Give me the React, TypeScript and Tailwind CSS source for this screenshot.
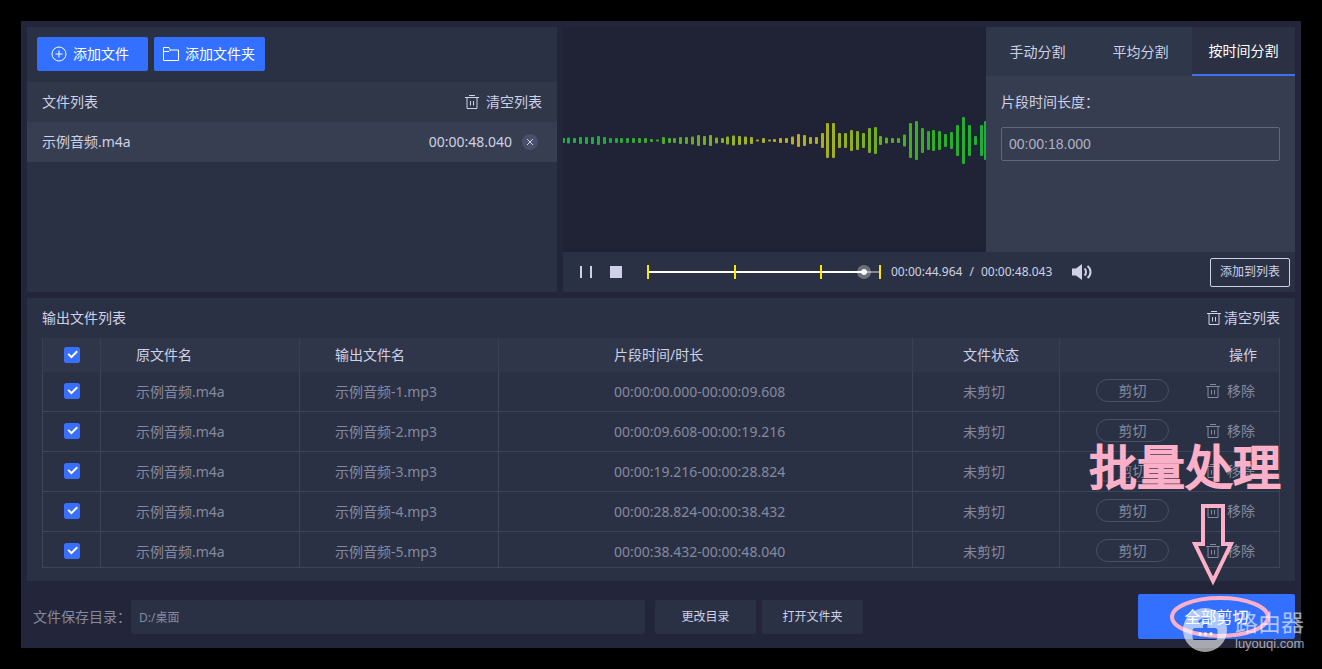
import React from "react";

const BARS: [number, number][] = [
  [0, 5], [5, 6], [11, 5], [17, 7], [23, 7], [29, 7], [35, 9], [41, 7], [47, 5], [53, 5], [58, 5], [64, 5],
  [70, 5], [76, 5], [82, 5], [88, 3], [94, 2], [100, 7], [106, 5], [111, 5], [117, 7], [123, 7], [129, 8],
  [135, 11], [141, 9], [147, 11], [153, 6], [159, 5], [164, 8], [170, 10], [176, 9], [182, 8], [188, 7],
  [194, 2], [200, 5], [206, 2], [211, 3], [217, 5], [223, 5], [229, 8], [235, 13], [241, 11], [247, 7],
  [253, 7], [259, 15], [264, 35], [270, 35], [276, 15], [282, 15], [288, 21], [294, 19], [300, 15],
  [306, 25], [312, 27], [317, 9], [323, 6], [329, 5], [335, 5], [341, 12], [347, 35], [353, 39], [359, 25],
  [365, 19], [370, 21], [376, 19], [382, 13], [388, 17], [394, 31], [400, 47], [406, 31], [412, 9],
  [418, 31], [422, 39],
];

const SEGMENTS = [
  { name: "示例音频-1.mp3", range: "00:00:00.000-00:00:09.608" },
  { name: "示例音频-2.mp3", range: "00:00:09.608-00:00:19.216" },
  { name: "示例音频-3.mp3", range: "00:00:19.216-00:00:28.824" },
  { name: "示例音频-4.mp3", range: "00:00:28.824-00:00:38.432" },
  { name: "示例音频-5.mp3", range: "00:00:38.432-00:00:48.040" },
];

function Trash() {
  return (
    <svg className="size-4 shrink-0" viewBox="0 0 16 16" fill="none" stroke="currentColor" strokeWidth="1" aria-hidden="true">
      <path d="M1 3.5h14M5 1.5h6M3 3.5v11h10v-11M6.5 7v4.5M9.5 7v4.5" />
    </svg>
  );
}

function Tick({ label }: { label: string }) {
  return (
    <label className="mx-auto grid size-4">
      <input
        type="checkbox"
        defaultChecked
        aria-label={label}
        className="peer col-start-1 row-start-1 size-4 appearance-none rounded-xs border border-[#6b7084] checked:border-[#386fff] checked:bg-[#386fff]"
      />
      <svg
        className="pointer-events-none col-start-1 row-start-1 size-4 opacity-0 peer-checked:opacity-100"
        viewBox="0 0 16 16"
        fill="none"
        stroke="#fff"
        strokeWidth="2"
        aria-hidden="true"
      >
        <path d="M4.2 6.900l3.200 3.200 5.800-5.800" />
      </svg>
    </label>
  );
}

function FilePanel() {
  return (
    <section className="min-w-0 flex-[530] bg-[#2b3144]">
      <div className="flex gap-1.5 px-2.5 pt-2.5 pb-[11px] text-sm text-white">
        <button className="flex h-[34px] w-[111px] items-center gap-1.5 rounded-xs bg-[#3370ff] pl-3.5">
          <svg className="size-4" viewBox="0 0 16 16" fill="none" stroke="currentColor" aria-hidden="true">
            <circle cx="8" cy="8" r="7" />
            <path d="M8 4.500v7M4.500 8h7" />
          </svg>
          添加文件
        </button>
        <button className="flex h-[34px] w-[111px] items-center gap-1.5 rounded-xs bg-[#3370ff] pl-[9px]">
          <svg className="size-4" viewBox="0 0 16 16" fill="none" stroke="currentColor" aria-hidden="true">
            <path d="M.5 14.500V1.500h5.500l1.500 2.500h8v10.500zM.5 5.500h5.500l1.500-1.500" />
          </svg>
          添加文件夹
        </button>
      </div>
      <div className="flex h-10 items-center justify-between bg-[#2f3749] px-[15px] text-sm">
        <h2>文件列表</h2>
        <button className="flex items-center gap-1.5">
          <Trash />
          清空列表
        </button>
      </div>
      <div className="flex h-10 items-center bg-[#373e51] pr-[19px] pl-[15px] text-sm">
        <span className="flex-1">示例音频.m4a</span>
        <span>00:00:48.040</span>
        <button aria-label="移除文件" className="ml-2.5 flex size-4 items-center justify-center rounded-full bg-[#4a4f6b]">
          <svg className="size-2" viewBox="0 0 8 8" stroke="currentColor" aria-hidden="true">
            <path d="M1 1l6 6M7 1L1 7" />
          </svg>
        </button>
      </div>
    </section>
  );
}

function Preview() {
  return (
    <div className="min-w-0 flex-[423] bg-[#202336]">
      <svg className="h-[225px] w-full" viewBox="0 0 423 225" preserveAspectRatio="xMinYMid slice" aria-label="音频波形">
        <defs>
          <linearGradient id="wave" gradientUnits="userSpaceOnUse" x1="0" x2="423" y1="0" y2="0">
            <stop offset="0" stopColor="#1fae48" />
            <stop offset="0.12" stopColor="#24a938" />
            <stop offset="0.3" stopColor="#63a928" />
            <stop offset="0.42" stopColor="#9fb327" />
            <stop offset="0.52" stopColor="#c0ad1f" />
            <stop offset="0.64" stopColor="#a0b022" />
            <stop offset="0.75" stopColor="#69ae20" />
            <stop offset="0.86" stopColor="#30ae22" />
            <stop offset="1" stopColor="#1bb03a" />
          </linearGradient>
        </defs>
        <g fill="url(#wave)">
          {BARS.map(([x, h]) => (
            <rect key={x} x={x - 1} y={113.5 - h / 2} width="3" height={h} rx="1" />
          ))}
        </g>
      </svg>
    </div>
  );
}

function SplitPanel() {
  return (
    <div className="min-w-0 flex-[309] bg-[#373d50] text-sm">
      <div role="tablist" className="grid h-[49px] grid-cols-3 bg-[#2f374a]">
        <button role="tab" aria-selected="false">手动分割</button>
        <button role="tab" aria-selected="false">平均分割</button>
        <button role="tab" aria-selected="true" className="border-b-2 border-[#3f70ee] bg-[#2b3042] text-white">
          按时间分割
        </button>
      </div>
      <div className="flex flex-col gap-[15px] px-[15px] pt-4">
        <label htmlFor="length" className="leading-5">片段时间长度：</label>
        <input
          id="length"
          defaultValue="00:00:18.000"
          className="h-[34px] w-full rounded-xs border border-[#636879] bg-transparent px-[7px] font-['Liberation_Sans',sans-serif] text-[#afb2c3]"
        />
      </div>
    </div>
  );
}

function Player() {
  return (
    <div className="flex h-10 items-center bg-[#2b3144] pr-[5px] pl-[15px] text-xs">
      <button aria-label="暂停" className="flex h-3 w-4 justify-center gap-2">
        <span className="h-3 w-0.5 bg-current" />
        <span className="h-3 w-0.5 bg-current" />
      </button>
      <button aria-label="停止" className="ml-4 size-3 bg-[#ced1e8]" />
      <div className="relative ml-[25px] flex h-3.5 w-[234px] items-center">
        <div className="absolute h-0.5 w-full bg-linear-to-r from-white from-93% to-[#85889a] to-93%" />
        <span className="absolute left-0 h-3.5 w-0.5 bg-[#fce700]" />
        <span className="absolute left-[37%] h-3.5 w-0.5 bg-[#fce700]" />
        <span className="absolute left-[74%] h-3.5 w-0.5 bg-[#fce700]" />
        <span className="absolute right-0 h-3.5 w-0.5 bg-[#fce700]" />
        <input
          type="range"
          aria-label="播放进度"
          min="0"
          max="100"
          step="0.5"
          defaultValue="95.5"
          className="relative h-3.5 w-full appearance-none bg-transparent [&::-webkit-slider-thumb]:size-3.5 [&::-webkit-slider-thumb]:appearance-none [&::-webkit-slider-thumb]:rounded-full [&::-webkit-slider-thumb]:border-4 [&::-webkit-slider-thumb]:border-white/30 [&::-webkit-slider-thumb]:bg-white [&::-webkit-slider-thumb]:bg-clip-padding"
        />
      </div>
      <span className="ml-2.5">00:00:44.964</span>
      <span className="mx-[7px]">/</span>
      <span>00:00:48.043</span>
      <button aria-label="音量" className="ml-5">
        <svg className="h-4 w-5" viewBox="0 0 20 16" fill="currentColor" aria-hidden="true">
          <path d="M0 4.500h4L10 0v16l-6-4.500H0z" />
          <path d="M12.500 4.500c2 1.500 2 5.500 0 7M15.500 2c4 3 4 9 0 12" fill="none" stroke="currentColor" strokeWidth="2" />
        </svg>
      </button>
      <button className="ml-auto h-[29px] w-20 rounded-xs border border-[#ced1e8]">添加到列表</button>
    </div>
  );
}

function OutputPanel() {
  const th = "border-l border-[#393f52] bg-[#30364a] font-normal";
  const td = "border-b border-l border-[#3e4457]";
  return (
    <section className="mt-1.5 bg-[#2b3144] px-[15px] pt-2.5 pb-[13px] text-sm">
      <div className="flex h-[30px] items-start justify-between leading-5">
        <h2>输出文件列表</h2>
        <button className="flex items-center gap-0.5">
          <Trash />
          清空列表
        </button>
      </div>
      <div className="h-[230px] overflow-hidden border-b border-[#3e4457]">
        <table className="w-full table-fixed border-separate border-spacing-0 border-r border-[#3e4457] text-left">
          <colgroup>
            <col className="w-[58px]" />
            <col className="w-[199px]" />
            <col className="w-[199px]" />
            <col />
            <col className="w-[147px]" />
            <col className="w-[220px]" />
          </colgroup>
          <thead>
            <tr className="h-[34px]">
              <th className={th}><Tick label="全选" /></th>
              <th className={`${th} pl-[35px]`}>原文件名</th>
              <th className={`${th} pl-[35px]`}>输出文件名</th>
              <th className={`${th} pl-[115px]`}>片段时间/时长</th>
              <th className={`${th} pl-[50px]`}>文件状态</th>
              <th className={`${th} pr-[22px] text-right`}>操作</th>
            </tr>
          </thead>
          <tbody className="text-[#85899f]">
            {SEGMENTS.map((s) => (
              <tr key={s.name} className="h-10">
                <td className={`${td} pb-0.5`}><Tick label={s.name} /></td>
                <td className={`${td} pl-[35px]`}>示例音频.m4a</td>
                <td className={`${td} pl-[35px]`}>{s.name}</td>
                <td className={`${td} pl-[115px]`}>{s.range}</td>
                <td className={`${td} pl-[50px]`}>未剪切</td>
                <td className={`${td} pb-0.5 pl-9`}>
                  <div className="flex items-center">
                    <button className="h-[23px] w-[73px] rounded-full border border-[#4b5165] leading-5">剪切</button>
                    <button className="ml-9 flex items-center gap-1.5 leading-5">
                      <Trash />
                      移除
                    </button>
                  </div>
                </td>
              </tr>
            ))}
          </tbody>
        </table>
      </div>
    </section>
  );
}

function Footer() {
  return (
    <footer className="flex h-[67px] items-center pt-1 text-xs">
      <label htmlFor="folder" className="w-[104px] pl-1.5 text-sm text-[#85899f]">文件保存目录：</label>
      <input
        id="folder"
        readOnly
        value="D:/桌面"
        className="h-[34px] min-w-0 flex-1 rounded-xs bg-[#2b3144] px-2 text-[#85899f]"
      />
      <button className="ml-2.5 h-[34px] w-[101px] rounded-xs bg-[#2b3144]">更改目录</button>
      <button className="ml-1.5 h-[34px] w-[101px] rounded-xs bg-[#2b3144]">打开文件夹</button>
      <button className="ml-[275px] h-[45px] w-[157px] rounded-xs bg-[#3370ff] text-base text-white">全部剪切</button>
    </footer>
  );
}

function Annotations() {
  return (
    <div className="pointer-events-none">
      <p className="absolute right-5 bottom-[157px] text-[48px] leading-[48px] text-[#fbb0c8] [-webkit-text-stroke:2px_#fbb0c8]">批量处理</p>
      <svg
        className="absolute right-[30px] bottom-2 h-[138px] w-[102px]"
        viewBox="0 0 102 138"
        fill="none"
        stroke="#fbb0c8"
        strokeWidth="4"
        aria-hidden="true"
      >
        <path d="M34 4h20v38h8L44 79 26 42h8z" />
        <ellipse cx="51" cy="115" rx="48" ry="19" />
      </svg>
      <div className="absolute -right-1 -bottom-1 flex items-center gap-2 text-white/60">
        <svg className="size-11" viewBox="0 0 44 44" fill="currentColor" aria-hidden="true">
          <path
            fillRule="evenodd"
            d="M22 0a22 22 0 1 1 0 44a22 22 0 1 1 0-44zM15 13q7-6 14 0l-1.500 2q-5.500-4.500-11 0zM20 15h4.500v5H32q2.500 0 2.500 2.500v7q0 2.500-2.500 2.500H12q-2.500 0-2.500-2.500v-7q0-2.500 2.500-2.500h8z"
          />
          <circle cx="17" cy="26" r="1.700" fill="#fff" />
          <circle cx="22.500" cy="26" r="1.700" fill="#fff" />
          <circle cx="28" cy="26" r="1.700" fill="#fff" />
        </svg>
        <div className="flex w-[70px] flex-col">
          <span className="text-[23px] leading-7">路由器</span>
          <span className="font-['Liberation_Sans',sans-serif] text-[13px] leading-4">luyouqi.com</span>
        </div>
      </div>
    </div>
  );
}

export default function App() {
  return (
    <div className="min-h-screen bg-black p-[21px] font-['Noto_Sans','Noto_Sans_CJK_SC',sans-serif] text-[#ced1e8]">
      <main className="relative bg-[#23263a] px-1.5 pt-1.5">
        <div className="flex gap-1.5">
          <FilePanel />
          <section className="flex min-w-0 flex-[732] flex-col">
            <div className="flex h-[225px] overflow-hidden">
              <Preview />
              <SplitPanel />
            </div>
            <Player />
          </section>
        </div>
        <OutputPanel />
        <Footer />
        <Annotations />
      </main>
    </div>
  );
}
